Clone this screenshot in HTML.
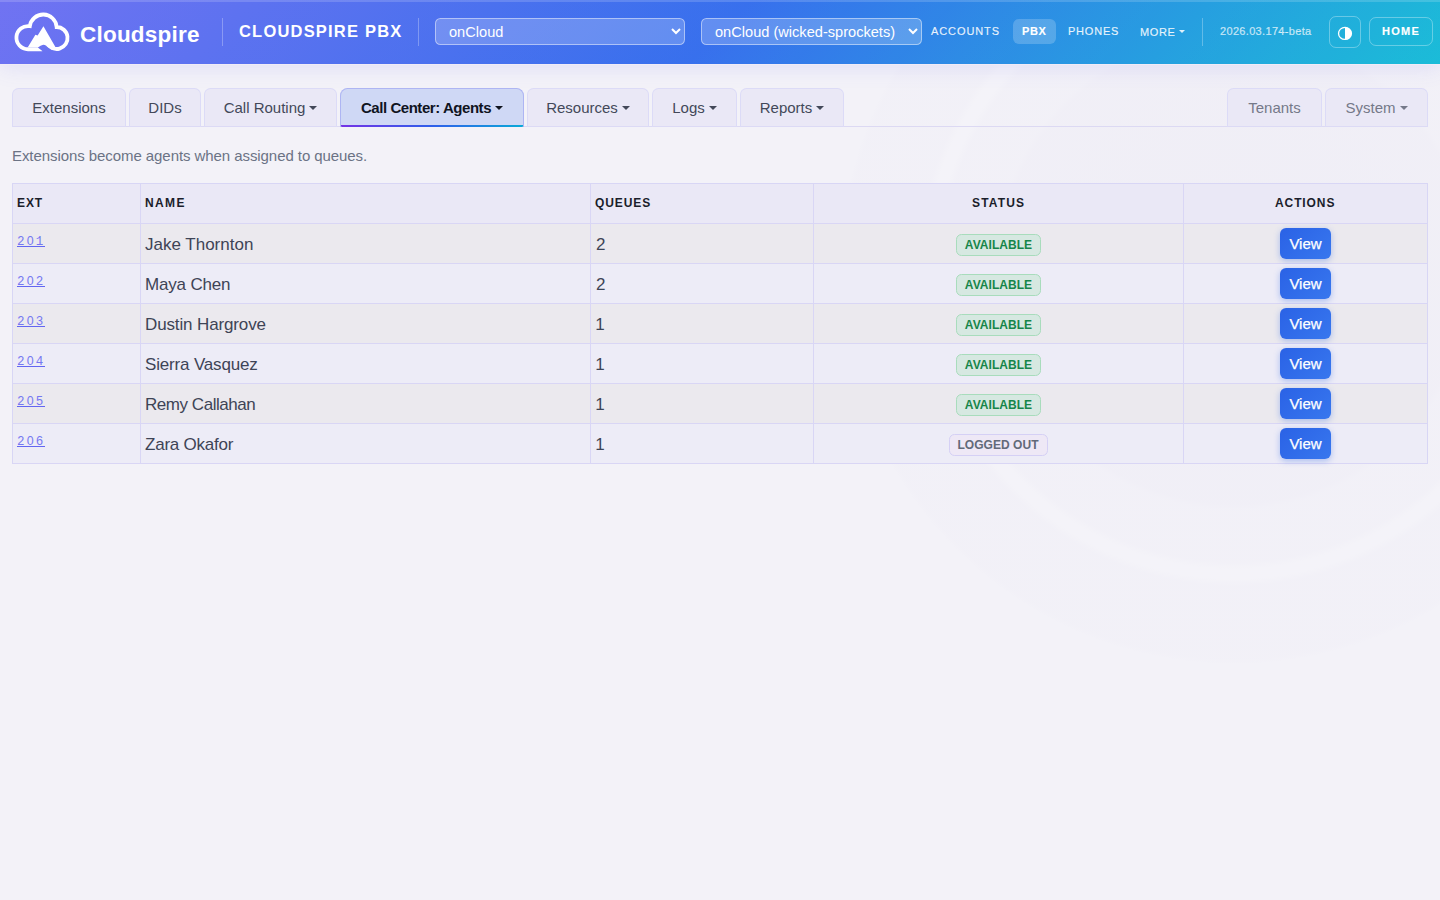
<!DOCTYPE html>
<html lang="en">
<head>
<meta charset="utf-8">
<title>Cloudspire PBX - Call Center Agents</title>
<style>
*{box-sizing:border-box;margin:0;padding:0}
html,body{width:1440px;height:900px;overflow:hidden}
body{font-family:"Liberation Sans",sans-serif;background:#f3f2f8;color:#3b3f4c;position:relative}
.bgfx{position:absolute;left:0;top:0;width:1440px;height:900px;background:
 radial-gradient(circle at 1234px 270px, rgba(90,60,160,.022) 0, rgba(90,60,160,.017) 234px, rgba(90,60,160,.009) 240px, rgba(90,60,160,.009) 292px, rgba(255,255,255,.1) 300px, rgba(255,255,255,.1) 308px, rgba(90,60,160,.009) 316px, rgba(90,60,160,.009) 389px, rgba(90,60,160,0) 395px);pointer-events:none}
/* ---------- header ---------- */
.hdr{position:absolute;left:0;top:0;width:1440px;height:64px;background:linear-gradient(rgba(255,255,255,.085),rgba(255,255,255,.085)),linear-gradient(135deg,#6366f1 0%,#2563eb 50%,#06b6d4 100%);box-shadow:0 4px 20px rgba(99,102,241,.13)}
.hdr .botline{position:absolute;left:0;top:64px;width:100%;height:1px;background:#f0ebf7}
.hdr .topline{position:absolute;left:0;top:0;width:100%;height:2px;background:rgba(255,255,255,.16)}
.hdr .abs{position:absolute;white-space:nowrap;color:#fff}
.sep{position:absolute;top:18px;width:1px;height:28px;background:rgba(255,255,255,.28)}
.brand{left:80px;top:20.5px;font-size:22.5px;font-weight:700;line-height:28px;letter-spacing:.22px}
.title{left:239px;top:20.8px;font-size:16.5px;line-height:20px;font-weight:700;letter-spacing:1.2px}
.sel{position:absolute;top:18px;height:27px;border:1px solid rgba(255,255,255,.46);border-radius:5.5px;background:rgba(255,255,255,.21);color:#fff;font-size:14.6px;line-height:27px;padding-left:13px;white-space:nowrap}
.sel svg{position:absolute;top:8.700px;width:10px;height:7px}
.nav{font-size:11px;line-height:14px;letter-spacing:.55px;font-weight:400;color:rgba(255,255,255,.86)!important;-webkit-text-stroke:.2px rgba(255,255,255,.8)}
.pill{position:absolute;left:1013px;top:19px;width:43px;height:24.6px;border-radius:6px;background:rgba(255,255,255,.2)}
.caret{position:absolute;width:0;height:0;border-left:3px solid transparent;border-right:3px solid transparent;border-top:3px solid currentColor}
.hbtn{position:absolute;border:1px solid rgba(255,255,255,.32);border-radius:7px}
/* ---------- tabs ---------- */
.tabline{position:absolute;left:12px;top:126px;width:1416px;height:1px;background:#dcd9f3}
.tab{position:absolute;top:88px;height:39px;border:1px solid #dcdbf7;border-bottom-color:#dcdaf5;border-radius:6.5px 6.5px 0 0;background:#eae8f6;color:#434859;font-size:15px;line-height:37px;text-align:center;white-space:nowrap}
.tab.r{color:#757989}
.tab.act{border-radius:7.5px 7.5px 0 0;background:#cfd8f5;border-color:#aeb5f3;color:#10141f;font-weight:700;border-bottom:0;letter-spacing:-.45px}
.tab.act:after{content:"";position:absolute;left:0;right:0;bottom:0;height:2px;border-radius:0 0 1px 1px;background:linear-gradient(90deg,#7433e6,#2f5fea 50%,#0aa9d8)}
.tab i{display:inline-block;width:0;height:0;border-left:4px solid transparent;border-right:4px solid transparent;border-top:4px solid currentColor;margin-left:4px;vertical-align:3px}
.sub{position:absolute;left:12px;top:146px;font-size:15px;line-height:20px;color:#6b7385;white-space:nowrap;letter-spacing:-.07px}
/* ---------- table ---------- */
.tbl{position:absolute;left:12px;top:183px;width:1416px;height:281px;border:1px solid #d8d6f5;background:#edecf7}
.row{position:absolute;left:0;width:1414px;height:40px;border-bottom:1px solid #d9d6f5}
.row.h{top:0;background:#eae8f6}
.row.o{background:#ebe9ee}
.row.e{background:#edecf7}
.row:last-child{border-bottom:0}
.vl{position:absolute;top:0;width:1px;height:279px;background:#d9d6f5}
.c{position:absolute;white-space:nowrap}
.th{top:12px;font-size:12px;line-height:14px;font-weight:700;letter-spacing:.9px;color:#1b1e2b}
.ext{left:4px;top:13px;height:10px;font-family:"Liberation Mono",monospace;font-size:12.5px;line-height:11px;letter-spacing:1.9px;color:#7578f2;border-bottom:1px solid #6366f1}
.ext .z{font-family:"Liberation Sans",sans-serif;line-height:0;font-size:12.4px;letter-spacing:2.2px;margin-left:.25px}
.nm{left:132px;top:11px;font-size:17px;line-height:20px;color:#3e4456}
.q{left:583px;top:11px;font-size:17px;line-height:20px;color:#3e4456}
.bd{position:absolute;top:10px;height:22px;border-radius:5.5px;font-size:12px;line-height:21px;font-weight:700;letter-spacing:.05px;text-align:center}
.bd.av{left:943px;width:85px;background:#d6e8e1;border:1px solid #a8dcbc;color:#17854a}
.bd.lo{left:936px;width:99px;background:#eee8f6;border:1px solid #d5d0f5;color:#626a79;text-indent:-1px}
.vb{position:absolute;left:1267px;top:4px;width:51px;height:31px;border-radius:6px;background:linear-gradient(135deg,#2a62e6,#3877ee);color:#fff;font-size:15px;line-height:31px;text-align:center;box-shadow:0 2px 6px rgba(43,99,230,.35);-webkit-text-stroke:.25px #fff}
</style>
</head>
<body>
<div class="bgfx"></div>

<div class="hdr">
  <div class="topline"></div><div class="botline"></div>
  <svg class="abs" style="left:12px;top:8px" width="62" height="48" viewBox="12 8 62 48" fill="none">
    <defs><mask id="lm" maskUnits="userSpaceOnUse" x="0" y="0" width="90" height="70"><rect x="0" y="0" width="90" height="70" fill="#fff"/><path d="M37.900 47.400Q40.600 45.400 43.200 44.750Q44.800 44.700 46.200 45.780A12.950 12.950 0 0 0 56.550 50.950V58H42.300V51.100Z" fill="#000"/></mask></defs>
    <g mask="url(#lm)">
      <path d="M44 49.250H28A11.600 11.600 0 1 1 29.820 26.190A13.500 13.500 0 0 1 56.660 27A11 11 0 1 1 46.500 42.470" stroke="#fff" stroke-width="3.800" stroke-linejoin="miter" stroke-miterlimit="6"/>
      <path d="M27.800 47.350L35.400 34.800L37.600 35.600L43.440 26.170L55.550 47.350Z" fill="#fff"/>
    </g>
  </svg>
  <div class="abs brand">Cloudspire</div>
  <div class="sep" style="left:222px"></div>
  <div class="abs title">CLOUDSPIRE PBX</div>
  <div class="sep" style="left:418px"></div>

  <div class="sel" style="left:435px;width:250px">onCloud
    <svg style="left:235px" viewBox="0 0 10 7"><path d="M1 1L5 5L9 1" stroke="#fff" stroke-width="2" fill="none"/></svg>
  </div>
  <div class="sel" style="left:701px;width:221px">onCloud (wicked-sprockets)
    <svg style="left:206px" viewBox="0 0 10 7"><path d="M1 1L5 5L9 1" stroke="#fff" stroke-width="2" fill="none"/></svg>
  </div>

  <div class="abs nav" style="left:931px;top:24px;letter-spacing:.9px">ACCOUNTS</div>
  <div class="pill"></div>
  <div class="abs nav" style="left:1022px;top:24px;font-weight:700;color:#fff!important">PBX</div>
  <div class="abs nav" style="left:1068px;top:24px;letter-spacing:.78px">PHONES</div>
  <div class="abs nav" style="left:1140px;top:25px;letter-spacing:.6px">MORE</div>
  <div class="caret" style="left:1179px;top:30px;color:rgba(255,255,255,.86)"></div>
  <div class="sep" style="left:1202px"></div>
  <div class="abs nav" style="left:1220px;top:24px;letter-spacing:.33px;color:rgba(255,255,255,.68)!important">2026.03.174-beta</div>

  <div class="hbtn" style="left:1329px;top:16px;width:32px;height:32px"></div>
  <svg class="abs" style="left:1337px;top:25px" width="16" height="17" viewBox="0 0 16 17"><ellipse cx="8" cy="8.400" rx="6.450" ry="6.050" fill="none" stroke="#fff" stroke-width="1.300"/><path d="M8 2.350A6.450 6.050 0 0 1 8 14.450z" fill="#fff"/></svg>
  <div class="hbtn" style="left:1369px;top:17px;width:64px;height:29px"></div>
  <div class="abs nav" style="left:1382px;top:24px;font-weight:700;color:#fff!important;letter-spacing:1.25px">HOME</div>
</div>

<!-- tabs -->
<div class="tabline"></div>
<div class="tab" style="left:12px;width:114px">Extensions</div>
<div class="tab" style="left:129px;width:72px">DIDs</div>
<div class="tab" style="left:204px;width:133px">Call Routing<i></i></div>
<div class="tab act" style="left:340px;width:184px">Call Center: Agents<i></i></div>
<div class="tab" style="left:527px;width:122px">Resources<i></i></div>
<div class="tab" style="left:652px;width:85px">Logs<i></i></div>
<div class="tab" style="left:740px;width:104px">Reports<i></i></div>
<div class="tab r" style="left:1227px;width:95px">Tenants</div>
<div class="tab r" style="left:1325px;width:103px">System<i></i></div>

<div class="sub">Extensions become agents when assigned to queues.</div>

<!-- table -->
<div class="tbl">
  <div class="row h">
    <div class="c th" style="left:4px">EXT</div>
    <div class="c th" style="left:132px;letter-spacing:1.35px">NAME</div>
    <div class="c th" style="left:582px">QUEUES</div>
    <div class="c th" style="left:959px;letter-spacing:1.15px">STATUS</div>
    <div class="c th" style="left:1262px">ACTIONS</div>
  </div>
  <div class="row o" style="top:40px"><div class="c ext">2<span class="z">0</span>1</div><div class="c nm">Jake Thornton</div><div class="c q">2</div><div class="bd av">AVAILABLE</div><div class="vb">View</div></div>
  <div class="row e" style="top:80px"><div class="c ext">2<span class="z">0</span>2</div><div class="c nm" style="letter-spacing:-0.17px">Maya Chen</div><div class="c q">2</div><div class="bd av">AVAILABLE</div><div class="vb">View</div></div>
  <div class="row o" style="top:120px"><div class="c ext">2<span class="z">0</span>3</div><div class="c nm" style="letter-spacing:-0.13px">Dustin Hargrove</div><div class="c q" style="left:582.200px">1</div><div class="bd av">AVAILABLE</div><div class="vb">View</div></div>
  <div class="row e" style="top:160px"><div class="c ext">2<span class="z">0</span>4</div><div class="c nm" style="letter-spacing:-0.17px">Sierra Vasquez</div><div class="c q" style="left:582.200px">1</div><div class="bd av">AVAILABLE</div><div class="vb">View</div></div>
  <div class="row o" style="top:200px"><div class="c ext">2<span class="z">0</span>5</div><div class="c nm" style="letter-spacing:-0.45px">Remy Callahan</div><div class="c q" style="left:582.200px">1</div><div class="bd av">AVAILABLE</div><div class="vb">View</div></div>
  <div class="row e" style="top:240px"><div class="c ext">2<span class="z">0</span>6</div><div class="c nm" style="letter-spacing:-0.22px">Zara Okafor</div><div class="c q" style="left:582.200px">1</div><div class="bd lo">LOGGED OUT</div><div class="vb">View</div></div>
  <div class="vl" style="left:127px"></div>
  <div class="vl" style="left:577px"></div>
  <div class="vl" style="left:800px"></div>
  <div class="vl" style="left:1170px"></div>
</div>
</body>
</html>
